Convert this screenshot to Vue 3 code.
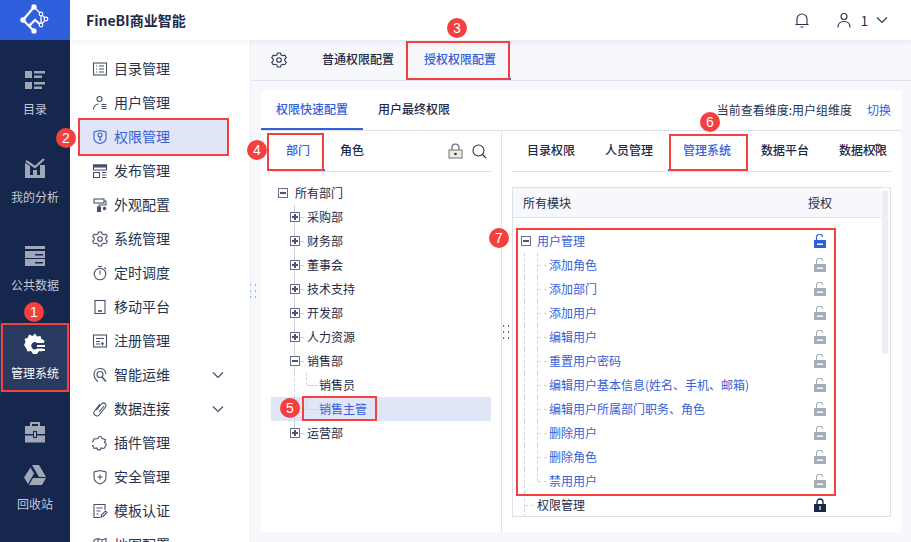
<template>
  <div class="app">
    <aside class="rail">
      <div class="logo">
        <svg width="40" height="40" viewBox="0 0 40 40" fill="none" stroke="#fff" stroke-width="1.800">
          <path d="M19 7L8 20l11 11M15 25l5-5 6 5" stroke-width="2.200" />
          <path d="M19 7l7 7 5 5-5 6V14" stroke-width="1.300" />
          <circle cx="19" cy="7" r="2.700" fill="#fff" stroke="none" />
          <circle cx="8" cy="20" r="2.700" fill="#fff" stroke="none" />
          <circle cx="19" cy="31" r="2.700" fill="#fff" stroke="none" />
          <circle cx="15" cy="25" r="1.400" fill="#fff" stroke="none" />
          <circle cx="26" cy="14" r="1.800" fill="#2f5fdc" stroke-width="1.200" />
          <circle cx="31" cy="19" r="1.800" fill="#2f5fdc" stroke-width="1.200" />
          <circle cx="26" cy="25" r="1.800" fill="#2f5fdc" stroke-width="1.200" />
        </svg>
      </div>
      <div
        v-for="item in railItems"
        :key="item.icon"
        class="rail-item"
        :class="{ active: item.active, compact: !item.label, tail: item.icon === 'recycle' }"
      >
        <svg class="rail-icon" width="24" height="24" viewBox="0 0 24 24" v-html="railIcons[item.icon]"></svg>
        <span v-if="item.label">{{ item.label }}</span>
      </div>
    </aside>

    <div class="page">
      <header class="topbar">
        <span class="brand">FineBI商业智能</span>
        <svg class="bell" width="16" height="16" viewBox="0 0 16 16" fill="none" stroke="#26334f" stroke-width="1.100">
          <path d="M3 12.500V7a5 5 0 0 1 10 0v5.500M1.500 12.500h13M6.500 15h3" />
        </svg>
        <svg class="user" width="14" height="16" viewBox="0 0 14 16" fill="none" stroke="#26334f" stroke-width="1.100">
          <circle cx="7" cy="4.500" r="3" />
          <path d="M1 15.500c0-4 2.500-6 6-6s6 2 6 6" />
        </svg>
        <span class="user-name">1</span>
        <svg width="12" height="8" viewBox="0 0 12 8" fill="none" stroke="#26334f" stroke-width="1.100">
          <path d="M1 1.500l5 5 5-5" />
        </svg>
      </header>

      <div class="body">
        <nav class="side">
          <div v-for="item in navItems" :key="item.label" class="side-item" :class="{ active: item.active }">
            <svg class="side-icon" width="16" height="16" viewBox="0 0 16 16" v-html="navIcons[item.icon]"></svg>
            <span class="side-label">{{ item.label }}</span>
            <svg v-if="item.arrow" class="side-arrow" width="12" height="8" viewBox="0 0 12 8" fill="none" stroke="#3c4966" stroke-width="1.100">
              <path d="M1 1.500l5 5 5-5" />
            </svg>
          </div>
        </nav>

        <main class="main">
          <div class="main-tabs">
            <svg class="gear" width="16" height="16" viewBox="0 0 16 16" fill="none" stroke="#2a3753" stroke-width="1.100" v-html="navIcons.gear"></svg>
            <span class="main-tab first">普通权限配置</span>
            <span class="main-tab current">授权权限配置</span>
          </div>

          <section class="card">
            <div class="sub-tabs">
              <span class="sub-tab current">权限快速配置</span>
              <span class="sub-tab">用户最终权限</span>
              <span class="dimension">当前查看维度:用户组维度</span>
              <span class="switch">切换</span>
            </div>

            <div class="panes">
              <div class="left-pane">
                <div class="left-tabs">
                  <span class="left-tab current">部门</span>
                  <span class="left-tab">角色</span>
                  <svg class="tool-lock" width="15" height="16" viewBox="0 0 15 16" fill="none" stroke="#4b566e" stroke-width="1.100">
                    <path d="M4 7V4.500a3.500 3.500 0 0 1 7 0V7" />
                    <rect x="1" y="7" width="13" height="8" fill="#f3ead9" stroke="#77808f" />
                    <circle cx="7.500" cy="11" r="1.300" fill="#26334f" stroke="none" />
                  </svg>
                  <svg class="tool-search" width="15" height="15" viewBox="0 0 15 15" fill="none" stroke="#26334f" stroke-width="1.100">
                    <circle cx="6.500" cy="6.500" r="5.500" />
                    <path d="M10.500 10.500l3.500 3.500" />
                  </svg>
                </div>
                <div class="tree">
                  <div
                    v-for="row in deptRows"
                    :key="row.label"
                    class="tree-row"
                    :class="[`lvl-${row.level}`, { selected: row.selected, last: row.last }]"
                  >
                    <i v-if="row.level > 1" class="trunk"></i>
                    <i v-if="row.level === 3" class="branch"></i>
                    <i v-if="row.level > 1" class="tick"></i>
                    <span v-if="row.toggle" class="toggle" :class="row.toggle"></span>
                    <span class="tree-label">{{ row.label }}</span>
                  </div>
                </div>
              </div>

              <div class="right-pane">
                <div class="right-tabs">
                  <span v-for="tab in moduleTabs" :key="tab" class="right-tab" :class="{ current: tab === '管理系统' }">{{ tab }}</span>
                  <svg class="tab-more" width="10" height="10" viewBox="0 0 10 10" fill="none" stroke="#3a4660">
                    <circle cx="5" cy="5" r="4" />
                  </svg>
                </div>
                <div class="grid">
                  <div class="grid-head">
                    <span>所有模块</span>
                    <span class="grant-title">授权</span>
                  </div>
                  <div class="scrollbar"></div>
                  <div
                    v-for="row in moduleRows"
                    :key="row.label"
                    class="grid-row"
                    :class="{ parent: row.parent, child: row.child, end: row.end, peer: row.peer }"
                  >
                    <i v-if="row.child || row.peer" class="grid-trunk"></i>
                    <i v-if="row.child" class="grid-branch"></i>
                    <i v-if="row.child || row.peer" class="grid-tick"></i>
                    <span v-if="row.parent" class="toggle minus"></span>
                    <span class="grid-label">{{ row.label }}</span>
                    <svg class="lock" width="12" height="14" viewBox="0 0 12 14" :class="row.lock">
                      <template v-if="row.lock === 'closed'">
                        <path d="M3 7V4a3 3 0 0 1 6 0v3" fill="none" stroke="currentColor" stroke-width="1.300" />
                        <rect y="6" width="12" height="8" fill="currentColor" />
                        <rect x="5" y="8" width="2" height="4" fill="#c9a55c" />
                      </template>
                      <template v-else>
                        <path d="M2.500 6V3.500a3 3 0 0 1 6-.5" fill="none" stroke="currentColor" stroke-width="1.200" />
                        <rect y="6" width="12" height="8" fill="currentColor" />
                        <rect x="3" y="9.500" width="6" height="1.400" fill="#fff" />
                      </template>
                    </svg>
                  </div>
                </div>
              </div>
            </div>
          </section>
        </main>
      </div>
    </div>

    <!-- annotations drawn over the page -->
    <svg class="grip grip-a" width="7" height="14" viewBox="0 0 7 14" fill="#8fb4e6">
      <rect v-for="p in gripDots" :key="p.join()" :x="p[0]" :y="p[1]" width="1" height="2" />
    </svg>
    <svg class="grip grip-b" width="7" height="14" viewBox="0 0 7 14" fill="#6d5a68">
      <rect v-for="p in gripDots" :key="p.join()" :x="p[0]" :y="p[1]" width="1" height="2" />
    </svg>
    <div v-for="n in 7" :key="`box${n}`" class="mark" :class="`mark-${n}`"></div>
    <div v-for="n in 7" :key="`dot${n}`" class="badge" :class="`badge-${n}`">{{ n }}</div>
  </div>
</template>

<script setup>
const railItems = [
  { icon: 'catalog', label: '目录' },
  { icon: 'analysis', label: '我的分析' },
  { icon: 'data', label: '公共数据' },
  { icon: 'manage', label: '管理系统', active: true },
  { icon: 'toolbox' },
  { icon: 'recycle', label: '回收站' }
]

const railIcons = {
  catalog: '<g fill="currentColor"><rect x="2" y="3" width="7" height="7"/><rect x="11" y="3" width="11" height="2.500"/><rect x="11" y="7.500" width="8" height="2.500"/><rect x="2" y="14" width="7" height="7"/><rect x="11" y="14" width="11" height="2.500"/><rect x="11" y="18.500" width="8" height="2.500"/></g>',
  analysis: '<g fill="currentColor"><rect x="2" y="7" width="5" height="12"/><rect x="10" y="14" width="4" height="5"/><rect x="17" y="9" width="5" height="10"/><rect x="2" y="19" width="20" height="3"/></g><path d="M3 5l9 6 9-8" fill="none" stroke="#15274d" stroke-width="4"/><path d="M3 5l9 6 9-8" fill="none" stroke="currentColor" stroke-width="2.200"/>',
  data: '<g fill="currentColor"><rect x="2" y="2" width="20" height="3"/><rect x="2" y="7" width="20" height="7"/><rect x="2" y="15" width="20" height="7"/></g><rect x="12" y="10" width="8" height="1.500" fill="#15274d"/><rect x="12" y="18" width="8" height="1.500" fill="#15274d"/>',
  manage: '<path fill="currentColor" d="M12 1.500l2 3 3.500-.5 1 3 3 1.500-.5 2.500h-7a3.500 3.500 0 1 0 0 5.500H20l-1.500 3-2.500-.5-2 3h-4l-2-3-3.500.5-1.500-3.500L1 13l1.500-3L1.500 7 5 5.500 6 2.500 9.500 4z"/><rect x="14" y="13" width="8" height="2" fill="currentColor"/><rect x="14" y="17" width="8" height="2" fill="currentColor"/>',
  toolbox: '<g fill="currentColor"><path d="M7 6V2h10v4h-2V4H9v2z"/><rect x="2" y="6" width="20" height="8"/><rect x="2" y="15.500" width="20" height="7"/></g><rect x="10" y="11" width="4" height="7" fill="#15274d"/><rect x="11" y="12" width="2" height="5" fill="#a0a8b8"/>',
  recycle: '<g fill="currentColor"><path d="M9 2h7l7 12h-7z"/><path d="M7.500 4.500l3.500 6-6 10.500-4-6.500z"/><path d="M10 15h13l-4 7H6z"/></g>'
}

const navItems = [
  { icon: 'list', label: '目录管理' },
  { icon: 'person', label: '用户管理' },
  { icon: 'shield', label: '权限管理', active: true },
  { icon: 'publish', label: '发布管理' },
  { icon: 'brush', label: '外观配置' },
  { icon: 'gear', label: '系统管理' },
  { icon: 'clock', label: '定时调度' },
  { icon: 'mobile', label: '移动平台' },
  { icon: 'register', label: '注册管理' },
  { icon: 'ops', label: '智能运维', arrow: true },
  { icon: 'clip', label: '数据连接', arrow: true },
  { icon: 'plugin', label: '插件管理' },
  { icon: 'safe', label: '安全管理' },
  { icon: 'template', label: '模板认证' },
  { icon: 'map', label: '地图配置' }
]

const navIcons = {
  list: '<rect x="1.500" y="2" width="13" height="12"/><path d="M4 5h1M7 5h5M4 8h1M7 8h5M4 11h1M7 11h5"/>',
  person: '<circle cx="7.500" cy="4" r="2.500"/><path d="M1.500 14.500c0-3 2-5 5-5.500M9.500 9.500h5M9.500 11.500h5M9.500 13.500h5"/>',
  shield: '<path d="M8 1.500l6 1.500v6c0 3-3 5-6 5.500-3-.500-6-2.500-6-5.500V3z"/><circle cx="8" cy="6" r="2"/><path d="M8 8v4M8 10.500h1.500"/>',
  publish: '<path d="M1.500 2h13v5h-13zM1.500 9.500h6v5h-6zM10 9.500h4.500M10 12h4.500M10 14.500h4.500"/><rect x="1.500" y="2" width="13" height="2" fill="currentColor"/>',
  brush: '<rect x="2" y="2" width="10" height="4"/><path d="M12 4h2v4H7v2"/><rect x="5.500" y="10" width="3" height="4.500" fill="currentColor"/><circle cx="12.500" cy="11.500" r="1.200" fill="currentColor"/>',
  gear: '<path d="M6.500 1.500h3l.5 2 1.800 1 2-.6 1.500 2.600-1.500 1.500v2l1.500 1.500-1.500 2.600-2-.6-1.800 1-.5 2h-3l-.5-2-1.800-1-2 .6L.7 11.500l1.500-1.500V8L.7 6.500l1.500-2.600 2 .6 1.800-1z" transform="translate(0 -.500) scale(1 .94)"/><circle cx="8" cy="8" r="2.300"/>',
  clock: '<circle cx="8" cy="9" r="5.800"/><path d="M8 5.500V9.500M6 1.500h4M12.500 2.500l1.500 1.500"/>',
  mobile: '<rect x="3" y="1.500" width="10" height="13"/><path d="M6 12h4" stroke-width="1.600"/>',
  register: '<rect x="1.500" y="2" width="13" height="12"/><path d="M4 5.500h8M4 8.500h4M4 11h4M10.500 9v3.500M8.800 10.700h3.400"/>',
  ops: '<path d="M8 1.500c-3.500 0-6 2.500-6 6 0 3 1.500 5 4 7M8 1.500c3 0 5.500 2 6 5.500"/><circle cx="8" cy="7.500" r="3"/><path d="M10 10l4 4.500" stroke-width="1.600"/>',
  clip: '<path d="M4.500 9l5-6a2.500 2.500 0 0 1 4 3l-6 7.500a3 3 0 0 1-5-3.500l5.500-7M7 11l5-6"/>',
  plugin: '<path d="M6 3.500a2 2 0 0 1 4 0l3.500 1-1 3a2 2 0 0 1 1 3.500l-1.500 2.500-3-.5a2 2 0 0 1-4 0l-3 .5-1-3a2 2 0 0 1 0-4l1-2.500z"/>',
  safe: '<path d="M8 1.500l6 1.500v5.500c0 3-3 5.500-6 6.500-3-1-6-3.500-6-6.500V3z"/><path d="M8 5.500v5M5.500 8h5"/>',
  template: '<path d="M13 7V1.500H2v13h6M4.500 5h6M4.500 8h4M4.500 11h2M9 14l.5-2 4-4 1.500 1.500-4 4z"/>',
  map: '<path d="M2 3l4-1.500 4 1.500 4-1.500v11l-4 1.500-4-1.500-4 1.500zM6 2v11M10 3v11"/>'
}

const deptRows = [
  { label: '所有部门', level: 1, toggle: 'minus' },
  { label: '采购部', level: 2, toggle: 'plus' },
  { label: '财务部', level: 2, toggle: 'plus' },
  { label: '董事会', level: 2, toggle: 'plus' },
  { label: '技术支持', level: 2, toggle: 'plus' },
  { label: '开发部', level: 2, toggle: 'plus' },
  { label: '人力资源', level: 2, toggle: 'plus' },
  { label: '销售部', level: 2, toggle: 'minus' },
  { label: '销售员', level: 3 },
  { label: '销售主管', level: 3, selected: true, last: true },
  { label: '运营部', level: 2, toggle: 'plus', last: true }
]

const moduleTabs = ['目录权限', '人员管理', '管理系统', '数据平台', '数据权限']

const childLabels = [
  '添加角色',
  '添加部门',
  '添加用户',
  '编辑用户',
  '重置用户密码',
  '编辑用户基本信息(姓名、手机、邮箱)',
  '编辑用户所属部门职务、角色',
  '删除用户',
  '删除角色',
  '禁用用户'
]

const moduleRows = [
  { label: '用户管理', parent: true, lock: 'active' },
  ...childLabels.map((label, i) => ({
    label,
    child: true,
    end: i === childLabels.length - 1,
    lock: 'idle'
  })),
  { label: '权限管理', peer: true, lock: 'closed' }
]

const gripDots = [
  [0, 0], [5, 0],
  [0, 6], [5, 6],
  [0, 12], [5, 12]
]
</script>

<style>
html,
body {
  margin: 0;
  background: #fff;
}
</style>

<style scoped>
.app {
  position: relative;
  display: flex;
  width: 911px;
  height: 542px;
  overflow: hidden;
  font-family: "Noto Sans CJK SC", "Liberation Sans", sans-serif;
  font-size: 12px;
  color: #1c2a47;
}

.rail {
  flex: none;
  width: 70px;
  background: #15274d;
  color: #c3c9d5;
}

.logo {
  display: flex;
  align-items: center;
  justify-content: center;
  height: 40px;
  margin-bottom: 20px;
  background: #2f5fdc;
}

.rail-item {
  display: flex;
  flex-direction: column;
  align-items: center;
  height: 68px;
  margin-bottom: 20px;
  padding-top: 8px;
  box-sizing: border-box;
  line-height: 18px;
}

.rail-icon {
  margin-bottom: 8px;
  color: #a0a8b8;
}

.rail-item.active {
  background: #283a60;
  color: #fff;
}

.rail-item.active .rail-icon {
  color: #fff;
}

.rail-item.compact {
  height: 43px;
  margin-bottom: 0;
}

.rail-item.tail {
  margin-bottom: 0;
}

.page {
  flex: 1;
  min-width: 0;
  display: flex;
  flex-direction: column;
}

.topbar {
  position: relative;
  z-index: 2;
  flex: none;
  display: flex;
  align-items: center;
  height: 40px;
  padding: 0 23px 0 16px;
  background: #fff;
  box-shadow: 0 2px 6px rgba(30, 50, 90, 0.07);
}

.brand {
  margin-right: auto;
  font-size: 14px;
  font-weight: 700;
}

.bell {
  margin-right: 27px;
}

.user {
  margin-right: 10px;
}

.user-name {
  margin-right: 8px;
  font-size: 13px;
}

.body {
  flex: 1;
  min-height: 0;
  display: flex;
}

.side {
  flex: none;
  width: 180px;
  padding-top: 12px;
  box-sizing: border-box;
  background: #fff;
}

.side-item {
  display: flex;
  align-items: center;
  height: 34px;
  margin-right: 21px;
  margin-left: 8px;
  padding-left: 14px;
  font-size: 14px;
  color: #26334f;
}

.side-label {
  margin-bottom: 2px;
}

.side-icon {
  flex: none;
  margin-right: 6px;
  fill: none;
  stroke: #45516c;
  stroke-width: 1.1;
  color: #45516c;
}

.side-item.active {
  background: #e0e6f8;
  color: #3560d8;
}

.side-item.active .side-icon {
  stroke: #3560d8;
}

.side-arrow {
  margin-left: auto;
  margin-right: 5px;
}

.main {
  flex: 1;
  min-width: 0;
  border-left: 1px solid #e9ebf2;
  background: #f6f8fc;
}

.main-tabs {
  display: flex;
  align-items: center;
  height: 40px;
  border-bottom: 1px solid #dfe2ec;
}

.gear {
  margin-left: 20px;
  margin-right: 35px;
}

.main-tab,
.sub-tab,
.left-tab,
.right-tab {
  display: flex;
  align-items: center;
  flex: none;
  height: 40px;
  padding: 0 15px 1px;
  font-weight: 500;
  box-sizing: border-box;
  border-bottom: 2px solid transparent;
}

.main-tab.first {
  padding: 0 0 1px;
  margin-right: 12px;
}

.main-tab.current {
  padding: 0 15px 1px 18px;
}

.main-tab.current,
.sub-tab.current,
.left-tab.current,
.right-tab.current {
  color: #3560d8;
  border-bottom-color: #3560d8;
}

.card {
  width: 640px;
  height: 442px;
  margin: 9px 0 0 10px;
  background: #fff;
}

.sub-tabs {
  display: flex;
  align-items: center;
  height: 40px;
  border-bottom: 1px solid #dfe2ec;
}

.dimension {
  margin-left: auto;
  margin-bottom: 2px;
  color: #26334f;
}

.switch {
  margin: 0 10px 2px 15px;
  color: #3560d8;
}

.panes {
  display: flex;
  height: 401px;
}

.left-pane {
  flex: none;
  width: 240px;
  border-right: 1px solid #dfe2ec;
}

.left-tabs {
  display: flex;
  align-items: center;
  height: 40px;
  margin: 0 10px;
  border-bottom: 1px solid #dfe2ec;
}

.tool-lock {
  margin-left: auto;
}

.tool-search {
  margin: 0 4px 0 9px;
}

.tree {
  margin: 9px 10px 0;
}

.tree-row {
  position: relative;
  display: flex;
  align-items: center;
  height: 24px;
  padding-left: 7px;
}

.tree-row.lvl-2 {
  padding-left: 19px;
}

.tree-row.lvl-3 {
  padding-left: 48px;
}

.tree-row.selected {
  background: #e0e6f8;
  color: #3560d8;
}

.tree-label,
.grid-label {
  margin-bottom: 2px;
  white-space: nowrap;
}

.toggle {
  position: relative;
  z-index: 1;
  flex: none;
  width: 10px;
  height: 10px;
  margin-right: 7px;
  border: 1px solid #66708a;
  box-sizing: border-box;
  background: #fff;
}

.toggle::before {
  content: "";
  position: absolute;
  left: 1px;
  right: 1px;
  top: 3px;
  height: 2px;
  background: #4b566e;
}

.toggle.plus::after {
  content: "";
  position: absolute;
  top: 1px;
  bottom: 1px;
  left: 3px;
  width: 2px;
  background: #4b566e;
}

.trunk {
  position: absolute;
  left: 23px;
  top: 0;
  bottom: 0;
  border-left: 1px solid #cfd3dd;
}

.tree-row.lvl-3 .trunk {
  border-left-style: dashed;
}

.tree-row.lvl-2.last .trunk {
  bottom: 50%;
}

.branch {
  position: absolute;
  left: 35px;
  top: 0;
  bottom: 50%;
  border-left: 1px dashed #cfd3dd;
}

.tick {
  position: absolute;
  left: 29px;
  width: 4px;
  top: 50%;
  border-top: 1px solid #cfd3dd;
}

.tree-row.lvl-3 .tick {
  left: 36px;
  width: 10px;
  border-top-style: dashed;
}

.right-pane {
  flex: 1;
  min-width: 0;
  padding: 0 10px;
}

.right-tabs {
  position: relative;
  display: flex;
  align-items: center;
  height: 40px;
  border-bottom: 1px solid #dfe2ec;
}

.tab-more {
  position: absolute;
  left: 361px;
  top: 12px;
}

.grid {
  position: relative;
  height: 330px;
  margin-top: 15px;
  border: 1px solid #dfe2ec;
  box-sizing: border-box;
  overflow: hidden;
}

.grid-head {
  display: flex;
  align-items: center;
  height: 30px;
  width: 368px;
  padding-left: 10px;
  box-sizing: border-box;
  border-bottom: 1px solid #dfe2ec;
  background: #f7f8fc;
}

.grant-title {
  margin-left: auto;
  margin-right: 49px;
}

.scrollbar {
  position: absolute;
  left: 369px;
  top: 2px;
  width: 6px;
  height: 164px;
  border-radius: 3px;
  background: #eceef3;
}

.grid-row {
  position: relative;
  display: flex;
  align-items: center;
  height: 24px;
  width: 320px;
  padding-left: 36px;
  box-sizing: border-box;
  color: #3560d8;
}

.grid-row.parent {
  margin-top: 11px;
  padding-left: 8px;
}

.grid-row.parent .toggle {
  margin-right: 6px;
}

.grid-row.peer {
  padding-left: 24px;
  color: #1c2a47;
}

.grid-trunk {
  position: absolute;
  left: 11px;
  top: 0;
  bottom: 0;
  border-left: 1px dashed #cfd3dd;
}

.grid-branch {
  position: absolute;
  left: 24px;
  top: 0;
  bottom: 0;
  border-left: 1px dashed #cfd3dd;
}

.grid-row.end .grid-branch {
  bottom: 50%;
}

.grid-tick {
  position: absolute;
  left: 25px;
  width: 9px;
  top: 50%;
  border-top: 1px dashed #cfd3dd;
}

.grid-row.peer .grid-tick {
  left: 12px;
}

.lock {
  margin-left: auto;
  margin-right: 7px;
  flex: none;
  color: #a6adba;
}

.lock.active {
  color: #2f5fdc;
}

.lock.closed {
  color: #15274d;
}

.grip {
  position: absolute;
}

.grip-a {
  left: 250px;
  top: 284px;
}

.grip-b {
  left: 503px;
  top: 325px;
}

.mark {
  position: absolute;
  z-index: 3;
  border: 2px solid #f4403f;
  box-sizing: border-box;
}

.mark-1 {
  left: 1px;
  top: 323px;
  width: 68px;
  height: 69px;
}

.mark-2 {
  left: 78px;
  top: 118px;
  width: 151px;
  height: 38px;
}

.mark-3 {
  left: 406px;
  top: 41px;
  width: 104px;
  height: 39px;
}

.mark-4 {
  left: 267px;
  top: 133px;
  width: 57px;
  height: 38px;
}

.mark-5 {
  left: 302px;
  top: 396px;
  width: 75px;
  height: 25px;
}

.mark-6 {
  left: 669px;
  top: 134px;
  width: 79px;
  height: 37px;
}

.mark-7 {
  left: 516px;
  top: 228px;
  width: 320px;
  height: 268px;
}

.badge {
  position: absolute;
  z-index: 4;
  display: flex;
  align-items: center;
  justify-content: center;
  width: 20px;
  height: 20px;
  border-radius: 50%;
  background: #f4403f;
  color: #fff;
  font-family: "Liberation Sans", sans-serif;
  font-size: 14px;
}

.badge-1 {
  left: 24px;
  top: 302px;
}

.badge-2 {
  left: 56px;
  top: 128px;
}

.badge-3 {
  left: 447px;
  top: 18px;
}

.badge-4 {
  left: 247px;
  top: 140px;
}

.badge-5 {
  left: 280px;
  top: 398px;
}

.badge-6 {
  left: 700px;
  top: 112px;
}

.badge-7 {
  left: 489px;
  top: 228px;
}
</style>
